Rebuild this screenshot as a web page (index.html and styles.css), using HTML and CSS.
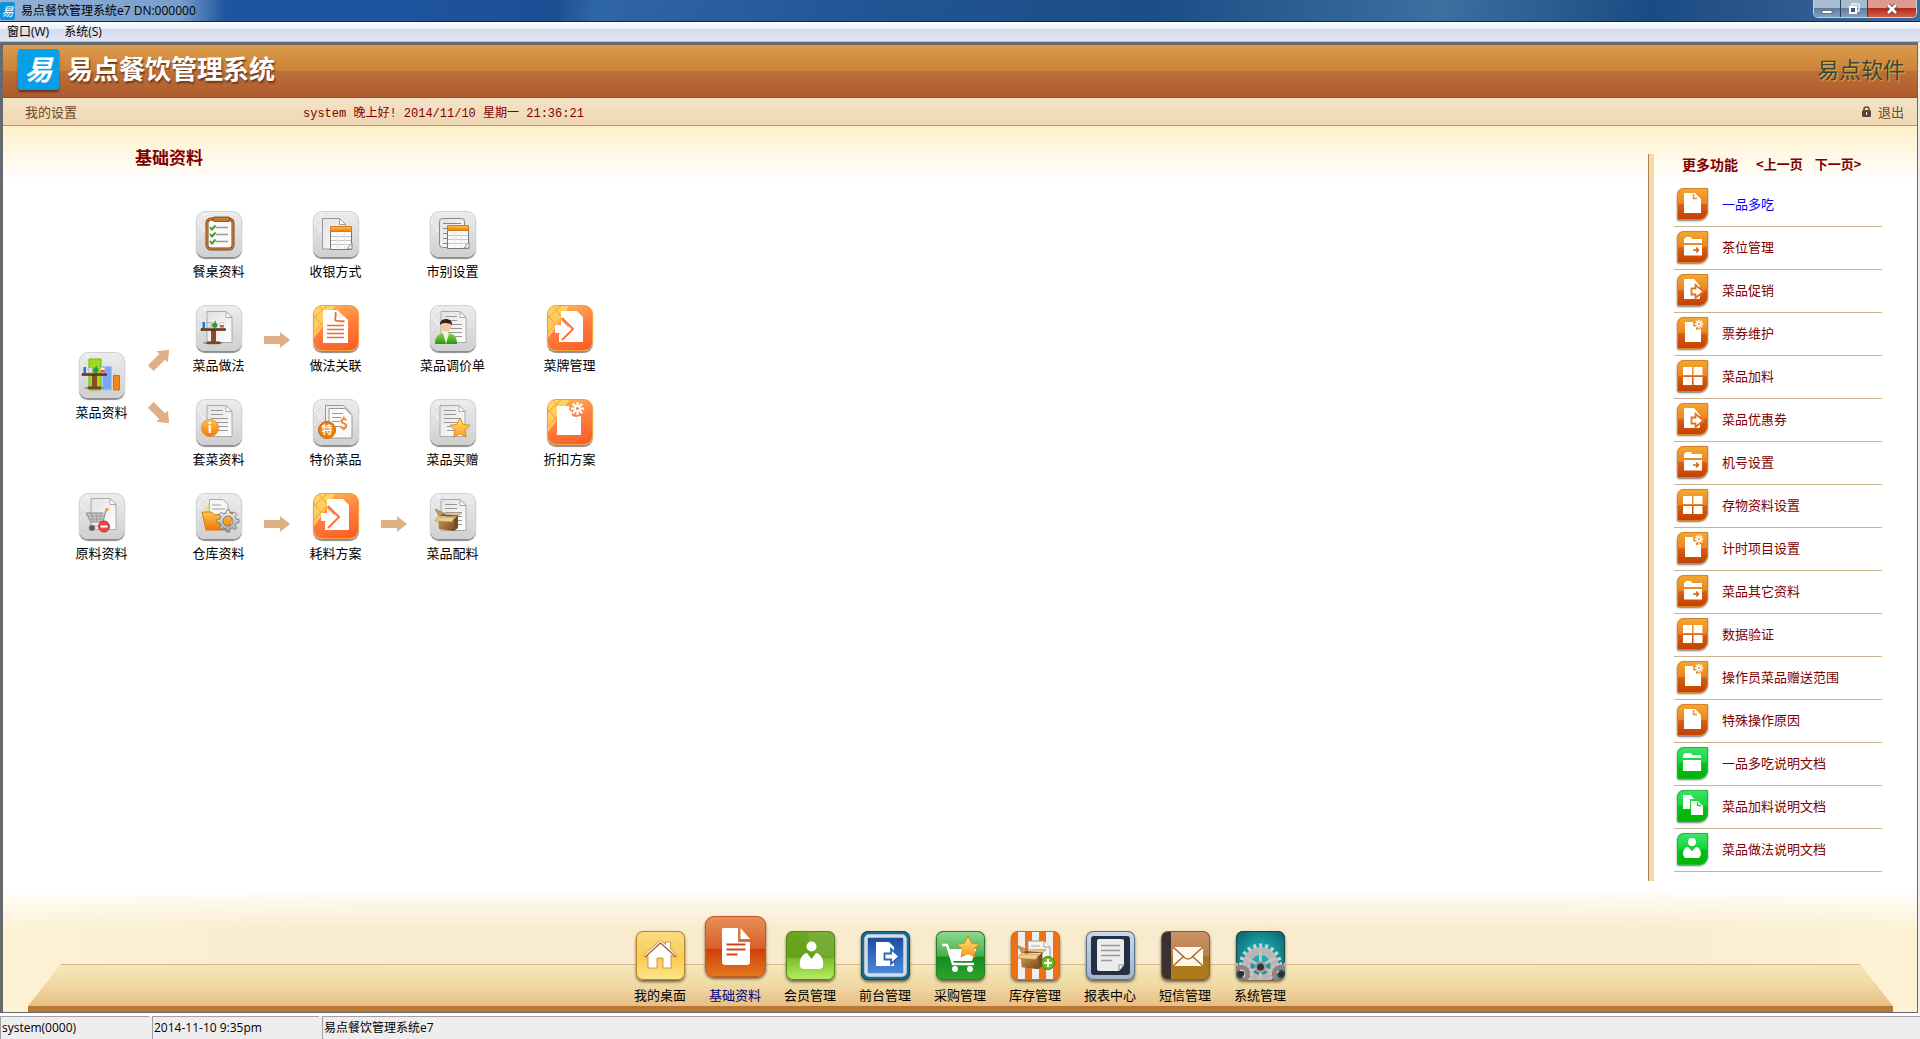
FILE: index.html
```html
<!DOCTYPE html>
<html lang="zh-CN">
<head>
<meta charset="utf-8">
<meta name="viewport" content="width=device-width, initial-scale=1">
<title>易点餐饮管理系统e7</title>
<link rel="stylesheet" href="styles.css">
</head>
<body>
<svg class="sprite" aria-hidden="true">
  <defs>
    <linearGradient id="g-orange" x1="0" y1="0" x2="0" y2="1"><stop offset="0" stop-color="#ffc44d"/><stop offset="1" stop-color="#f07a00"/></linearGradient>
    <linearGradient id="g-star" x1="0" y1="0" x2="0" y2="1"><stop offset="0" stop-color="#ffe27a"/><stop offset="1" stop-color="#ff9a1c"/></linearGradient>
    <linearGradient id="g-page" x1="0" y1="0" x2="1" y2="1"><stop offset="0" stop-color="#e2e2e2"/><stop offset="1" stop-color="#fff"/></linearGradient>
    <linearGradient id="g-green" x1="0" y1="0" x2="0" y2="1"><stop offset="0" stop-color="#8fd44a"/><stop offset="1" stop-color="#2c9410"/></linearGradient>
    <linearGradient id="g-steel" x1="0" y1="0" x2="0" y2="1"><stop offset="0" stop-color="#f4f4f4"/><stop offset="1" stop-color="#a0a0a6"/></linearGradient>
    <linearGradient id="g-box" x1="0" y1="0" x2="1" y2="1"><stop offset="0" stop-color="#c99a55"/><stop offset="1" stop-color="#7a4d1a"/></linearGradient>
    <linearGradient id="g-blue" x1="0" y1="0" x2="0" y2="1"><stop offset="0" stop-color="#1a4a9c"/><stop offset="1" stop-color="#4c8be0"/></linearGradient>

    <symbol id="lattice" viewBox="0 0 46 46"><path d="M1 13L14 1M1 27L24 2M6 1l11 14M1 10l9 12" fill="none" stroke="#fff" stroke-opacity=".7"/><path d="M2 13L15 1M2 27L25 2" fill="none" stroke="#555" stroke-opacity=".1"/></symbol>
    <symbol id="lattice-hot" viewBox="0 0 46 46"><path d="M1 1h21L8 24l-7 9z" fill="#ffe169" fill-opacity=".7"/><path d="M1 13L14 1M1 27L24 2M6 1l11 14M1 10l9 12" fill="none" stroke="#f7a037"/></symbol>
    <symbol id="paper" viewBox="0 0 46 46"><path d="M11 6.500h19l6 6V37.500H11z" fill="url(#g-page)" stroke="#aaa"/><path d="M30 6.500v6h6z" fill="#fff" stroke="#aaa"/></symbol>
    <symbol id="lined" viewBox="0 0 46 46"><use href="#paper"/><path d="M15 11.500h12M15 15.500h12M15 19.500h17M15 23.500h17M18 27.500h14M18 31.500h14" stroke="#999"/></symbol>
    <symbol id="sheet" viewBox="0 0 46 46"><path d="M17.500 16.500h21v22h-21z" fill="#fafafa" stroke="#777"/><path d="M17.500 15.500h21v5h-21z" fill="url(#g-orange)" stroke="#c98025"/><path d="M18 25.500h20M18 29.500h20M18 33.500h20" stroke="#c5c5c5"/><path d="M24.500 21v17M31.500 21v17" stroke="#e5e5e5"/><path d="M34 38l5-6v6z" fill="#fff" stroke="#888"/></symbol>
    <symbol id="bar-table" viewBox="0 0 46 46"><ellipse cx="17" cy="38" rx="10" ry="1.500" fill="#444" opacity=".5"/><path d="M15 25h5v12h-5z" fill="#8a4c24"/><path d="M11 36.500h13V39H11z" fill="#7a4422"/><path d="M5 23.500h24.500v2H5z" fill="#6e3c1e" stroke="#532a12" stroke-width=".6"/><path d="M6.500 17h2.500v6H6.500z" fill="#1c73d8"/><path d="M11 17.500h4.500V23H11z" fill="#ddd" stroke="#999" stroke-width=".6"/><circle cx="18.800" cy="20.300" r="2.700" fill="#2e9b38"/><path d="M18.800 17.500l1-1.500" stroke="#1c5a20"/><path d="M23.500 17.500H28l-.6 5.500h-3.300z" fill="#f4f4f4" stroke="#aaa" stroke-width=".5"/><path d="M24 20h3.600v2.500h-3.400z" fill="#e5484d"/></symbol>
    <symbol id="carton" viewBox="0 0 46 46"><path d="M8 25l16 1v12L9 36z" fill="url(#g-box)"/><path d="M24 26l4-4v13l-4 3z" fill="#7b4d1e"/><path d="M5 16l4 7 6-2-1-1z" fill="#c5974f" stroke="#a47430" stroke-width=".6"/><path d="M14 20h18l-4 3H10z" fill="#8a5a22"/><path d="M14 20h18l-3 2.500-14-1z" fill="#e8c384"/><path d="M8 24l-3 4 17 1 3-5z" fill="#f0cb8c" stroke="#a47430" stroke-width=".5"/></symbol>
    <symbol id="gear" viewBox="0 0 24 24"><path d="M10.500 1h3l.5 3 2.300 1 2.500-1.800 2 2L19 7.700l1 2.300 3 .5v3l-3 .5-1 2.300 1.800 2.500-2 2-2.500-1.800-2.300 1-.5 3h-3l-.5-3-2.300-1-2.500 1.800-2-2L5 16.300 4 14l-3-.5v-3l3-.5 1-2.300-1.800-2.500 2-2L7.700 5 10 4zM12 7a5 5 0 1 0 0 10 5 5 0 0 0 0-10z" fill="url(#g-steel)" fill-rule="evenodd" stroke="#66727c" stroke-width=".8"/></symbol>
    <symbol id="star" viewBox="0 0 24 24"><path d="M12 1l3.400 7 7.600 1-5.500 5.300 1.400 7.700-6.900-3.700L5.100 22l1.400-7.700L1 9l7.600-1z" fill="url(#g-star)" stroke="#d98a1c" stroke-linejoin="round"/></symbol>
    <symbol id="burst" viewBox="0 0 16 16"><path d="M8 1v14M1 8h14M3 3l10 10M13 3L3 13" stroke="#fff" stroke-width="2.400"/><circle cx="8" cy="8" r="1.600" fill="#f08a3c"/></symbol>

    <symbol id="t-clipboard" viewBox="0 0 46 46"><rect x="11" y="8" width="26" height="30" rx="4" fill="#fafafa" stroke="#7a3c0c" stroke-width="3"/><rect x="11" y="8" width="26" height="30" rx="4" fill="none" stroke="#c27a35" stroke-width="1.600"/><rect x="17" y="6" width="17" height="4.500" rx="1.500" fill="#c27a35" stroke="#7a3c0c" stroke-width=".8"/><path d="M14 16l2 2.500 3.500-4M14 23l2 2.500 3.500-4M14 30l2 2.500 3.500-4" fill="none" stroke="#4a9a1c" stroke-width="2"/><path d="M20 16.500h12M20 23.500h12M20 30.500h12" stroke="#999" stroke-width="1.300"/></symbol>
    <symbol id="t-cashier" viewBox="0 0 46 46"><path d="M9.500 7.500h17l6 6V38h-23z" fill="url(#g-page)" stroke="#999"/><path d="M26.500 7.500v6h6z" fill="#fff" stroke="#999"/><use href="#sheet"/></symbol>
    <symbol id="t-session" viewBox="0 0 46 46"><rect x="9.500" y="7.500" width="25" height="29" rx="3" fill="url(#g-page)" stroke="#888"/><path d="M13 12.500h18M13 17.500h5M13 22.500h4M13 27.500h4M13 32.500h4" stroke="#888"/><use href="#sheet" y="-1"/></symbol>
    <symbol id="t-cooking" viewBox="0 0 46 46"><use href="#paper"/><use href="#bar-table"/></symbol>
    <symbol id="t-article" viewBox="0 0 46 46"><path d="M10 5h14l11 10v23H10z" fill="#fff"/><path d="M22.500 7c1 3-1 7 0 8.500 2 1 6 .5 9 1" fill="none" stroke="#f26a2c" stroke-width="1.800"/><path d="M14 20.500h17M14 24.500h17M14 28.500h17M14 32.500h17" stroke="#f26a2c" stroke-width="1.600"/></symbol>
    <symbol id="t-price" viewBox="0 0 46 46"><use href="#lined"/><path d="M5 39c0-8 4-11 11-11s11 3 11 11z" fill="url(#g-green)"/><path d="M13 28l3 11 3-11z" fill="#e8f7dd"/><circle cx="16" cy="21" r="5.500" fill="#f2c9a0"/><path d="M10 20c-1-8 13-8 12 0-2-2-9-3-12 0z" fill="#33221c"/></symbol>
    <symbol id="t-export" viewBox="0 0 46 46"><path d="M14 6h16l6 6v25H12V29L22 22 14 13z" fill="#fff"/><path d="M15 13l11 11-11 11" fill="none" stroke="#f9743a" stroke-width="2"/><path d="M8 20h6v-5l9 9-9 9v-5H8z" fill="#fff"/></symbol>
    <symbol id="t-dish" viewBox="0 0 46 46"><path d="M10 7h12v31H10z" fill="#9cdc1c" stroke="#76b50c"/><path d="M23.500 14.500h9V38h-9z" fill="#7aa8f4" stroke="#a6c4fa"/><path d="M34.500 23.500h6V38h-6z" fill="#f78513" stroke="#e2690a"/><use href="#bar-table" x="-2" y="-2"/></symbol>
    <symbol id="t-combo" viewBox="0 0 46 46"><use href="#lined"/><circle cx="14" cy="29" r="8.500" fill="url(#g-orange)" stroke="#e6912a"/><text x="14" y="34" class="badge-text badge-info">i</text></symbol>
    <symbol id="t-special" viewBox="0 0 46 46"><path d="M12.500 6.500h18l7 7V38h-25z" fill="#eee" stroke="#999"/><path d="M16 9.500h16l7 7V39H16z" fill="#fafafa" stroke="#999"/><path d="M19 14.500h11M19 18.500h9M19 22.500h8M22 27.500h6" stroke="#999"/><text x="31" y="30" class="badge-text badge-dollar">$</text><circle cx="14" cy="31" r="8.500" fill="#ee7c0b" stroke="#d06200"/><text x="14" y="35" class="badge-text badge-special">特</text></symbol>
    <symbol id="t-gift" viewBox="0 0 46 46"><use href="#lined" x="-1"/><use href="#star" x="19" y="18" width="22" height="22"/></symbol>
    <symbol id="t-discount" viewBox="0 0 46 46"><path d="M10 7h12v4l3 2v4l4 1 5-1v19H10z" fill="#fff"/><use href="#burst" x="23" y="2" width="15" height="15"/></symbol>
    <symbol id="t-cart" viewBox="0 0 46 46"><use href="#paper" x="1" y="-1"/><path d="M27 17l-3 12H12L7 20h17" fill="#c2c2c2" fill-opacity=".85" stroke="#888"/><path d="M9 23h16M11 26h14M12 20l3 9M17 20l1 9M22 20l-1 9M24 29v4H12" fill="none" stroke="#9c9c9c"/><circle cx="28" cy="16.500" r="1.800" fill="#e3a13b"/><circle cx="13" cy="35" r="3" fill="#555" stroke="#999"/><circle cx="25" cy="33.500" r="5.500" fill="#ea4a44" stroke="#b8302c"/><path d="M21.500 33.500h7" stroke="#fff" stroke-width="2"/></symbol>
    <symbol id="t-warehouse" viewBox="0 0 46 46"><path d="M9 14l6-3 2 9-7 6z" fill="#ffd978"/><path d="M13.500 6.500H27l5 5V26H13z" fill="#f5f5f5" stroke="#aaa"/><path d="M16 12h9M16 16h13" stroke="#ccc" stroke-width="2"/><path d="M6 19h9l4 3 18-3-4 18H10z" fill="url(#g-orange)" stroke="#d07a10"/><use href="#gear" x="20" y="16" width="24" height="24"/></symbol>
    <symbol id="t-recipe" viewBox="0 0 46 46"><use href="#lined"/><use href="#carton"/></symbol>

    <symbol id="arrow" viewBox="0 0 28 18"><path d="M1 5h16V1l10 8-10 8v-4H1z" fill="#dfaf85"/></symbol>

    <symbol id="s-page" viewBox="0 0 31 32"><path d="M7 5h11l6 6v14H7z" fill="#fff"/><path d="M16.500 6v4.500H20" fill="none" stroke="#e9902c" stroke-width="1.500"/></symbol>
    <symbol id="s-folder" viewBox="0 0 31 32"><path d="M7 8l2-2h5l1 2h10v4H7zM7 14h18v10.500H7z" fill="#fff"/><path d="M16 19h5M19 16.500l2.500 2.500-2.500 2.500" fill="none" stroke="#d4631a" stroke-width="1.500"/></symbol>
    <symbol id="s-export" viewBox="0 0 31 32"><path d="M7 5h10l6 7v12l-1 1H7z" fill="#fff"/><path d="M14.500 14.500h4V11l8 6.500-8 6.500v-3.500h-4z" fill="#fff" stroke="#df7420" stroke-width="1.800"/></symbol>
    <symbol id="s-new" viewBox="0 0 31 32"><path d="M8 5h8v4l3 1v3l5-1v13H8z" fill="#fff"/><use href="#burst" x="17" y="2" width="10" height="10"/></symbol>
    <symbol id="s-grid" viewBox="0 0 31 32"><path d="M6 7h9v8H6zM16.500 7h9v8h-9zM6 17h9v8H6zM16.500 17h9v8h-9z" fill="#fff"/></symbol>
    <symbol id="s-docs" viewBox="0 0 31 32"><path d="M6 5h8l3 4h-4v10H6z" fill="#fff"/><path d="M14 11h7l5 5v9H14z" fill="#fff"/><path d="M20.500 11.500v4H24" fill="none" stroke="#18cf38" stroke-width="1.300"/></symbol>
    <symbol id="s-dir" viewBox="0 0 31 32"><path d="M6 8l2-2h6l1 2h9v3H6zM6 13h18v11H6z" fill="#fff"/></symbol>
    <symbol id="s-user" viewBox="0 0 31 32"><circle cx="15" cy="9" r="4" fill="#fff"/><path d="M6 22c0-5 2-8 5-8l4 4 4-4c3 0 5 3 5 8l-2 3H8z" fill="#fff"/></symbol>

    <symbol id="d-home" viewBox="0 0 49 49"><path d="M8 24L24.500 9l5 4.500V11h5v7l6 6-2.500 2-3-2v13H27V27h-6v10h-9V24l-3 2z" fill="#fff" stroke="#b2762c" stroke-width=".7"/><path d="M9 26l15.500-14L40 26" fill="none" stroke="#b2622c" stroke-width="1.300"/></symbol>
    <symbol id="d-doc" viewBox="0 0 61 61"><path d="M18 12h15v14h12v21l-2 2H19l-2-2V13z" fill="#fff"/><path d="M35.500 12v11H45z" fill="#fff"/><path d="M21.500 28.500h19M21.500 33.500h19M21.500 38.500h11" stroke="#c84a18" stroke-width="2.200"/></symbol>
    <symbol id="d-member" viewBox="0 0 49 49"><path d="M5 1h18c-4 18 8 24 25 26V8q0-7-7-7z" fill="#fff" opacity=".1"/><circle cx="25.500" cy="15.500" r="5" fill="#fff"/><path d="M14 36c-1-8 2-13 7-14l4.500 6 4.500-6c5 1 8 6 7 14l-3 2H17z" fill="#fff"/></symbol>
    <symbol id="d-front" viewBox="0 0 49 49"><rect x="5" y="5" width="39" height="39" rx="3" fill="url(#g-blue)" stroke="#d7dbe6" stroke-width="3.500"/><path d="M15 11h13l5 5v19H15z" fill="#fff"/><path d="M23.500 22.500H30V18l8.500 7.500L30 33v-4.500h-6.500z" fill="#fff" stroke="#2c64b8" stroke-width="1.800"/></symbol>
    <symbol id="d-buy" viewBox="0 0 49 49"><path d="M6 14h5l6 19h21" fill="none" stroke="#fff" stroke-width="2.400"/><path d="M13 18h27l-4 12H17z" fill="#fff"/><use href="#star" x="20" y="4" width="24" height="24"/><circle cx="19" cy="38" r="3" fill="#fff"/><circle cx="34" cy="38" r="3" fill="#fff"/></symbol>
    <symbol id="d-stock" viewBox="0 0 49 49"><path d="M17 10h16l6 6v16H17z" fill="#f4f4f4" stroke="#999"/><path d="M33 10v6h6" fill="#fff" stroke="#999"/><path d="M20 15h9M20 19h15" stroke="#aaa"/><use href="#carton" x="1" y="-3" width="50" height="50"/><circle cx="37" cy="32" r="6.500" fill="#6cbc1c" stroke="#3b7d08"/><path d="M33 32h8M37 28v8" stroke="#fff" stroke-width="2.200"/></symbol>
    <symbol id="d-report" viewBox="0 0 49 49"><rect x="5" y="5" width="39" height="39" rx="3" fill="#252e42"/><path d="M11 10q0-2 2-2h23q2 0 2 2v24l-5 6H13q-2 0-2-2z" fill="#ececec"/><path d="M33 40v-6h5z" fill="#fff" stroke="#888"/><path d="M15 14.500h19M15 19.500h19M15 24.500h19M15 29.500h11" stroke="#999" stroke-width="1.500"/></symbol>
    <symbol id="d-sms" viewBox="0 0 49 49"><path d="M1 7q0-6 6-6h3v47H7q-6 0-6-6z" fill="#3a3130"/><path d="M12 16h30v19H12z" fill="#fff9ea"/><path d="M12 16l12 11q3 2 6 0l12-11M12 35l11-10M42 35L31 25" fill="none" stroke="#a76a35" stroke-width="1.500"/></symbol>
    <symbol id="d-system" viewBox="0 0 49 49"><circle cx="24.500" cy="34" r="14" fill="none" stroke="#b9b5b5" stroke-width="8"/><circle cx="24.500" cy="34" r="19.500" fill="none" stroke="#d4d0d0" stroke-width="4" stroke-dasharray="3 3"/><path d="M24.500 18v30M10 27l29 16M39 27L10 43" stroke="#c6c2c2" stroke-width="3"/><circle cx="24.500" cy="36" r="6" fill="#a09b9b"/><circle cx="24.500" cy="36" r="3.500" fill="#383436"/><g fill="none" stroke="#8f8484"><circle cx="5" cy="43" r="7" stroke-width="5"/><circle cx="45" cy="43" r="7" stroke-width="5"/><circle cx="5" cy="43" r="10.500" stroke="#c9c2c2" stroke-width="3" stroke-dasharray="2 2"/><circle cx="45" cy="43" r="10.500" stroke="#c9c2c2" stroke-width="3" stroke-dasharray="2 2"/></g><circle cx="5" cy="43" r="3" fill="#3b2b30"/><circle cx="45" cy="43" r="3" fill="#3b2b30"/></symbol>
  </defs>
</svg>

<div class="window">
  <header class="titlebar">
    <span class="app-mark" aria-hidden="true">易</span>
    <h1 class="window-title">易点餐饮管理系统e7 DN:000000</h1>
    <div class="window-buttons">
      <button class="win-btn" type="button" aria-label="最小化"><svg width="14" height="14" viewBox="0 0 14 14"><path d="M2 8.500h10v3H2z" fill="#fff" stroke="#4a5a70" stroke-width=".7"/></svg></button>
      <button class="win-btn" type="button" aria-label="还原"><svg width="14" height="14" viewBox="0 0 14 14"><path d="M5 4V2h7v7h-2" fill="none" stroke="#eef" stroke-width="1.500"/><path d="M3 5h6v6H3z" fill="#43556d" stroke="#fff" stroke-width="2"/></svg></button>
      <button class="win-btn win-close" type="button" aria-label="关闭"><svg width="14" height="14" viewBox="0 0 14 14"><path d="M3 3l8 8M11 3l-8 8" stroke="#5d3540" stroke-width="4.500"/><path d="M3 3l8 8M11 3l-8 8" stroke="#fff" stroke-width="2.800"/></svg></button>
    </div>
  </header>
  <nav class="menubar"><button type="button">窗口(W)</button><button type="button">系统(S)</button></nav>

  <div class="workspace">
    <div class="brandbar">
      <span class="logo" aria-hidden="true">易</span>
      <p class="brand">易点餐饮管理系统</p>
      <p class="vendor">易点软件</p>
    </div>
    <div class="infobar">
      <a class="settings" href="#">我的设置</a>
      <p class="greeting">system 晚上好! 2014/11/10 星期一 21:36:21</p>
      <a class="logout" href="#"><svg width="9" height="11" viewBox="0 0 9 11"><path d="M2 5V3q0-2 2.500-2T7 3v2" fill="none" stroke="#5a4632" stroke-width="1.500"/><rect y="4" width="9" height="7" rx="1.500" fill="#5a4632"/><path d="M4 6h1v3H4z" fill="#fff"/></svg>退出</a>
    </div>

    <div class="content">
      <main class="board">
        <h2>基础资料</h2>
        <div class="flow">
          <button type="button" class="tile c2 r1"><span class="tile-icon"><svg><use href="#lattice"/><use href="#t-clipboard"/></svg></span>餐桌资料</button>
          <button type="button" class="tile c3 r1"><span class="tile-icon"><svg><use href="#lattice"/><use href="#t-cashier"/></svg></span>收银方式</button>
          <button type="button" class="tile c4 r1"><span class="tile-icon"><svg><use href="#lattice"/><use href="#t-session"/></svg></span>市别设置</button>

          <button type="button" class="tile c1 r23"><span class="tile-icon"><svg><use href="#lattice"/><use href="#t-dish"/></svg></span>菜品资料</button>
          <svg class="arrow a1 r2 arrow-up"><use href="#arrow"/></svg>
          <svg class="arrow a1 r3 arrow-down"><use href="#arrow"/></svg>

          <button type="button" class="tile c2 r2"><span class="tile-icon"><svg><use href="#lattice"/><use href="#t-cooking"/></svg></span>菜品做法</button>
          <svg class="arrow a2 r2"><use href="#arrow"/></svg>
          <button type="button" class="tile c3 r2"><span class="tile-icon hot"><svg><use href="#lattice-hot"/><use href="#t-article"/></svg></span>做法关联</button>
          <button type="button" class="tile c4 r2"><span class="tile-icon"><svg><use href="#lattice"/><use href="#t-price"/></svg></span>菜品调价单</button>
          <button type="button" class="tile c5 r2"><span class="tile-icon hot"><svg><use href="#lattice-hot"/><use href="#t-export"/></svg></span>菜牌管理</button>

          <button type="button" class="tile c2 r3"><span class="tile-icon"><svg><use href="#lattice"/><use href="#t-combo"/></svg></span>套菜资料</button>
          <button type="button" class="tile c3 r3"><span class="tile-icon"><svg><use href="#lattice"/><use href="#t-special"/></svg></span>特价菜品</button>
          <button type="button" class="tile c4 r3"><span class="tile-icon"><svg><use href="#lattice"/><use href="#t-gift"/></svg></span>菜品买赠</button>
          <button type="button" class="tile c5 r3"><span class="tile-icon hot"><svg><use href="#lattice-hot"/><use href="#t-discount"/></svg></span>折扣方案</button>

          <button type="button" class="tile c1 r4"><span class="tile-icon"><svg><use href="#lattice"/><use href="#t-cart"/></svg></span>原料资料</button>
          <button type="button" class="tile c2 r4"><span class="tile-icon"><svg><use href="#lattice"/><use href="#t-warehouse"/></svg></span>仓库资料</button>
          <svg class="arrow arrow-stock a2 r4"><use href="#arrow"/></svg>
          <button type="button" class="tile c3 r4"><span class="tile-icon hot"><svg><use href="#lattice-hot"/><use href="#t-export"/></svg></span>耗料方案</button>
          <svg class="arrow arrow-stock a3 r4"><use href="#arrow"/></svg>
          <button type="button" class="tile c4 r4"><span class="tile-icon"><svg><use href="#lattice"/><use href="#t-recipe"/></svg></span>菜品配料</button>
        </div>
      </main>

      <aside class="more">
        <div class="more-head"><h3>更多功能</h3><a href="#">&lt;上一页</a><a href="#">下一页&gt;</a></div>
        <ul class="more-list">
          <li><a class="current" href="#"><svg class="chip"><use href="#s-page"/></svg>一品多吃</a></li>
          <li><a href="#"><svg class="chip"><use href="#s-folder"/></svg>茶位管理</a></li>
          <li><a href="#"><svg class="chip"><use href="#s-export"/></svg>菜品促销</a></li>
          <li><a href="#"><svg class="chip"><use href="#s-new"/></svg>票券维护</a></li>
          <li><a href="#"><svg class="chip"><use href="#s-grid"/></svg>菜品加料</a></li>
          <li><a href="#"><svg class="chip"><use href="#s-export"/></svg>菜品优惠券</a></li>
          <li><a href="#"><svg class="chip"><use href="#s-folder"/></svg>机号设置</a></li>
          <li><a href="#"><svg class="chip"><use href="#s-grid"/></svg>存物资料设置</a></li>
          <li><a href="#"><svg class="chip"><use href="#s-new"/></svg>计时项目设置</a></li>
          <li><a href="#"><svg class="chip"><use href="#s-folder"/></svg>菜品其它资料</a></li>
          <li><a href="#"><svg class="chip"><use href="#s-grid"/></svg>数据验证</a></li>
          <li><a href="#"><svg class="chip"><use href="#s-new"/></svg>操作员菜品赠送范围</a></li>
          <li><a href="#"><svg class="chip"><use href="#s-page"/></svg>特殊操作原因</a></li>
          <li><a href="#"><svg class="chip chip-green"><use href="#s-dir"/></svg>一品多吃说明文档</a></li>
          <li><a href="#"><svg class="chip chip-green"><use href="#s-docs"/></svg>菜品加料说明文档</a></li>
          <li><a href="#"><svg class="chip chip-green"><use href="#s-user"/></svg>菜品做法说明文档</a></li>
        </ul>
      </aside>
    </div>

    <nav class="dock">
      <button type="button" class="dock-item"><svg class="dock-icon home"><use href="#d-home"/></svg>我的桌面</button>
      <button type="button" class="dock-item active"><svg class="dock-icon doc"><use href="#d-doc"/></svg>基础资料</button>
      <button type="button" class="dock-item"><svg class="dock-icon member"><use href="#d-member"/></svg>会员管理</button>
      <button type="button" class="dock-item"><svg class="dock-icon front"><use href="#d-front"/></svg>前台管理</button>
      <button type="button" class="dock-item"><svg class="dock-icon buy"><use href="#d-buy"/></svg>采购管理</button>
      <button type="button" class="dock-item"><svg class="dock-icon stock"><use href="#d-stock"/></svg>库存管理</button>
      <button type="button" class="dock-item"><svg class="dock-icon report"><use href="#d-report"/></svg>报表中心</button>
      <button type="button" class="dock-item"><svg class="dock-icon sms"><use href="#d-sms"/></svg>短信管理</button>
      <button type="button" class="dock-item"><svg class="dock-icon system"><use href="#d-system"/></svg>系统管理</button>
    </nav>
  </div>

  <footer class="statusbar"><span class="status-user">system(0000)</span><span class="status-time">2014-11-10 9:35pm</span><span class="status-app">易点餐饮管理系统e7</span></footer>
</div>
</body>
</html>
```

FILE: styles.css
```css
* {
  box-sizing: border-box;
}

body,
h1,
h2,
h3,
p,
ul {
  margin: 0;
  padding: 0;
}

body {
  font: 13px/18px "Noto Sans CJK SC", sans-serif;
  color: #000;
  background: #eee;
}

button {
  border: 0;
  padding: 0;
  background: none;
  color: inherit;
  font: inherit;
}

a {
  color: inherit;
  text-decoration: none;
}

.sprite {
  position: absolute;
  width: 0;
  height: 0;
}

.window {
  display: flex;
  flex-direction: column;
  min-height: 100vh;
}

/* Window frame */
.titlebar {
  display: flex;
  align-items: center;
  height: 22px;
  padding-right: 3px;
  gap: 6px;
  border-bottom: 1px solid #14243c;
  background:
    linear-gradient(90deg, rgba(160, 188, 222, .9) 0, rgba(135, 170, 212, .85) 180px, rgba(120, 160, 205, 0) 225px),
    linear-gradient(100deg, #1f55a0 20%, #1b4f94 29%, #2f66a8 31%, #215595 45%, #1d4d86 60%, #3e6f9f 75%, #1c4a83 86%, #3c6a9a 100%);
}

.app-mark {
  width: 15px;
  height: 18px;
  border-radius: 2px;
  background: #0b93dd;
  color: #fff;
  font-size: 12px;
  font-style: italic;
  text-align: center;
}

.window-title {
  font: 12px/18px "Open Sans", "Noto Sans CJK SC", sans-serif;
}

.window-buttons {
  display: flex;
  align-self: flex-start;
  margin-left: auto;
  height: 18px;
  border: 1px solid #c4d3e2;
  border-top: 0;
  border-radius: 0 0 5px 5px;
  overflow: hidden;
}

.win-btn {
  display: flex;
  align-items: center;
  justify-content: center;
  width: 27px;
  border-right: 1px solid #2b4058;
  background: linear-gradient(#a9bccf 45%, #5f7d9c 50%, #84a2bf);
}

.win-close {
  width: 48px;
  border-right: 0;
  background: linear-gradient(#dd9a8d 45%, #b32b17 50%, #d0604a);
}

.menubar {
  display: flex;
  gap: 15px;
  height: 20px;
  padding-left: 7px;
  border-bottom: 1px solid #b4bccf;
  background: linear-gradient(#fff, #e9eef7 35%, #d5dcee 38%, #e2e6f6);
  font: 12px/20px "Open Sans", "Noto Sans CJK SC", sans-serif;
}

.workspace {
  display: flex;
  flex: 1;
  flex-direction: column;
  margin-right: 2px;
  border: solid #666a6e;
  border-width: 3px 1px 1px 3px;
  background: #fff;
}

.brandbar {
  display: flex;
  align-items: center;
  gap: 8px;
  height: 53px;
  padding: 0 12px 4px 15px;
  border-bottom: 1px solid #a34f17;
  background: linear-gradient(#dc9c4c, #cb8238 49%, #bf7038 50%, #ad5a2e);
}

.logo {
  width: 41px;
  height: 41px;
  border-radius: 3px;
  background: #07a0e8;
  box-shadow: 0 2px 2px rgba(50, 25, 10, .6);
  color: #fff;
  font-size: 28px;
  font-style: italic;
  font-weight: 700;
  line-height: 38px;
  text-align: center;
}

.brand,
.vendor {
  padding-bottom: 3px;
  line-height: 40px;
}

.brand {
  color: #fff;
  font-size: 26px;
  font-weight: 700;
  text-shadow: 1px 2px 2px #6b3413;
}

.vendor {
  margin-left: auto;
  color: #39443e;
  font-size: 22px;
  text-shadow: 1px 1px 1px #e8b84a;
}

.infobar {
  display: flex;
  align-items: center;
  height: 28px;
  padding: 0 13px 0 22px;
  border-bottom: 1px solid #be9468;
  background: linear-gradient(#f3e3c5, #efd7b4);
  color: #6b4a26;
}

.settings {
  width: 278px;
}

.greeting {
  padding-top: 5px;
  color: #800000;
  font: 12px/18px "Liberation Mono", "Noto Sans CJK SC", monospace;
}

.logout {
  display: flex;
  align-items: center;
  gap: 7px;
  margin-left: auto;
}

/* Function board */
.content {
  display: flex;
  flex: 1;
  align-items: flex-start;
  justify-content: space-between;
  background: linear-gradient(#fff0ca, #fff 56px);
}

.board h2 {
  padding: 19px 0 0 132px;
  color: #800000;
  font-size: 17px;
  line-height: 24px;
}

.flow {
  display: grid;
  grid-template-columns: 89px 28px 89px 28px 89px 28px 89px 28px 89px;
  grid-template-rows: repeat(4, 69px);
  row-gap: 25px;
  padding: 42px 0 0 54px;
}

.tile {
  display: flex;
  flex-direction: column;
  align-items: center;
  gap: 5px;
  white-space: nowrap;
}

.tile-icon {
  width: 46px;
  height: 46px;
  border: 1px solid #d2d2d2;
  border-radius: 9px;
  background: linear-gradient(#ececec, #d0d0d0);
  box-shadow: 0 2px 1px #8c8c8c;
  overflow: hidden;
}

.tile-icon svg {
  display: block;
  width: 46px;
  height: 46px;
  margin: -1px;
}

.tile-icon.hot {
  border-color: #f3a03c;
  background: linear-gradient(160deg, #ffbe58, #ff8143 45%, #fa5a22);
}

.c1 { grid-column: 1; }
.c2 { grid-column: 3; }
.c3 { grid-column: 5; }
.c4 { grid-column: 7; }
.c5 { grid-column: 9; }
.a1 { grid-column: 2; }
.a2 { grid-column: 4; }
.a3 { grid-column: 6; }
.r1 { grid-row: 1; }
.r2 { grid-row: 2; }
.r3 { grid-row: 3; }
.r4 { grid-row: 4; }

.r23 {
  grid-row: 2 / 4;
  align-self: center;
}

.arrow {
  align-self: center;
  width: 28px;
  height: 18px;
}

.arrow-stock {
  margin-bottom: 8px;
}

.arrow-up {
  align-self: end;
  margin-bottom: 6px;
  transform: rotate(-45deg);
}

.arrow-down {
  align-self: start;
  margin-top: 6px;
  transform: rotate(45deg);
}

.badge-text {
  fill: #fff;
  font-family: "Noto Sans CJK SC", sans-serif;
  font-weight: 700;
  text-anchor: middle;
}

.badge-info { font-size: 14px; }
.badge-special { font-size: 11px; }

.badge-dollar {
  fill: #f08a24;
  font-size: 15px;
}

/* Side list */
.more {
  width: 269px;
  margin-top: 28px;
  padding: 0 35px 9px 26px;
  background: linear-gradient(90deg, #a88456 1px, #f5d9a8 1px) no-repeat left / 6px 100%;
}

.more-head {
  display: flex;
  gap: 12px;
  padding: 1px 0 11px 8px;
  color: #800000;
  white-space: nowrap;
}

.more-head h3 {
  margin-right: 6px;
  font-size: 14px;
}

.more-head a {
  font-weight: 700;
}

.more-list {
  list-style: none;
}

.more-list a {
  display: flex;
  align-items: center;
  gap: 14px;
  height: 43px;
  padding: 0 0 2px 3px;
  border-bottom: 1px solid #c9b491;
  color: #800000;
  white-space: nowrap;
}

.more-list .current {
  color: #00f;
}

.chip {
  flex: none;
  width: 31px;
  height: 32px;
  border-radius: 7px 1px 9px 2px;
  background: linear-gradient(#f6a92f, #e98420 50%, #d85f10 52%, #c33e00);
  box-shadow: inset 0 0 0 1px #d98328, 0 1px 2px #777;
}

.chip-green {
  background: linear-gradient(#3fe46a, #12d43a 50%, #04c216 52%, #00b400);
  box-shadow: inset 0 0 0 1px #1cb93c, 0 1px 2px #777;
}

/* Dock and shelf */
.dock {
  position: relative;
  isolation: isolate;
  display: flex;
  align-items: flex-end;
  justify-content: center;
  height: 131px;
  padding-bottom: 8px;
  background:
    linear-gradient(#fff 6px, rgba(255, 255, 255, 0) 48px),
    linear-gradient(90deg, #fdf2d4, #f9ebcd 20%, #f9ebcd 80%, #fdf2d4);
}

.dock::before,
.dock::after {
  content: "";
  position: absolute;
  z-index: -1;
  right: 24px;
  bottom: 0;
  left: 25px;
  height: 6px;
  background: #b87733;
}

.dock::before {
  bottom: 6px;
  height: 42px;
  background: linear-gradient(#dcb48a 1px, #f4e8b8 1px, #f0dca6 45%, #e7bf85);
  clip-path: polygon(33px 0, calc(100% - 33px) 0, 100% 100%, 0 100%);
}

.dock-item {
  display: flex;
  flex-direction: column;
  align-items: center;
  width: 75px;
  gap: 6px;
}

.dock-item.active {
  gap: 9px;
  color: #000080;
}

.dock-icon {
  width: 49px;
  height: 49px;
  border-radius: 7px;
  box-shadow: 0 2px 3px #766040;
}

.home { background: linear-gradient(#fbdc80, #f8cf5e 50%, #fcc64c 51%, #fde88e); box-shadow: inset 0 0 0 1px #b98530, 0 2px 3px #766040; }
.doc { width: 61px; height: 61px; border-radius: 9px; background: linear-gradient(#e9905a, #d9602c 53%, #cd3f0c 54%, #e37a1c); box-shadow: inset 0 0 0 1px #c45a22, 0 2px 3px #766040; }
.member { background: linear-gradient(#6aa524, #63a318 54%, #79bd2b 55%, #b8ee62); box-shadow: inset 0 0 0 1px #4e8f12, 0 2px 3px #766040; }
.front { background: #186c92; box-shadow: inset 0 0 0 1px #0b4a68, 0 2px 3px #766040; }
.buy { background: linear-gradient(#8fdb91, #47ae4b 51%, #168c1c 53%, #31a32f); box-shadow: inset 0 0 0 1px #1e8427, 0 2px 3px #766040; }
.stock { background: repeating-linear-gradient(90deg, #ee7016 0 7px, #efefef 7px 14px); box-shadow: inset 0 0 0 1px #db6a1a, 0 2px 3px #766040; }
.report { background: linear-gradient(#c9dae9, #9db5cc); box-shadow: inset 0 0 0 1px #5c7289, 0 2px 3px #766040; }
.sms { background: linear-gradient(#cb9468, #ba8052 50%, #a8731f 52%, #b27d1c); box-shadow: inset 0 0 0 1px #8c5a2e, 0 2px 3px #766040; }
.system { background: radial-gradient(#18b0b8 20%, #0e5b60); box-shadow: inset 0 0 0 1px #0c4b50, 0 2px 3px #766040; }

.statusbar {
  display: flex;
  gap: 3px;
  height: 26px;
  padding-top: 3px;
  background: linear-gradient(#fff 3px, #eee 3px);
  font: 12px/22px "Open Sans", "Noto Sans CJK SC", sans-serif;
}

.statusbar span {
  padding-left: 1px;
  border-top: 1px solid #a0a0a0;
  border-left: 1px solid #a0a0a0;
}

.status-user { width: 149px; }
.status-time { width: 167px; }
.status-app { flex: 1; }
```
